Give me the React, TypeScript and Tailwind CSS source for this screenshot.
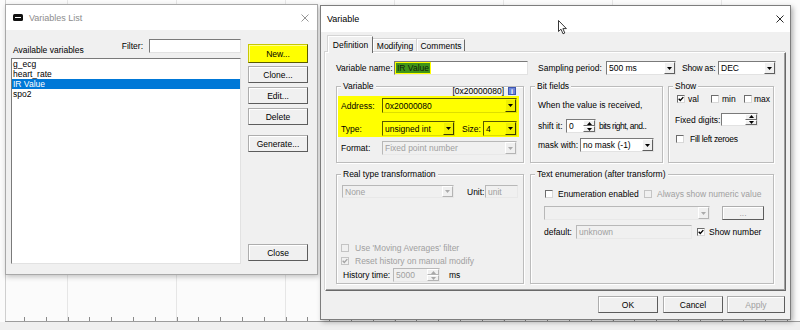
import React from "react";

const SUNKEN = "border border-t-[#7a7a7a] border-l-[#7a7a7a] border-r-[#e2e2e2] border-b-[#e2e2e2]";
const SUNKEN_DIS = "border border-t-[#b8b8b8] border-l-[#b8b8b8] border-r-[#e8e8e8] border-b-[#e8e8e8]";
const SUNKEN_Y = "border border-t-[#5a5a00] border-l-[#5a5a00] border-r-[#dede00] border-b-[#dede00]";
const GRAY_TEXT = "text-[#a0a0a0]";

function Tri({ up, color = "#000" }: { up?: boolean; color?: string }) {
  return (
    <svg width="5" height="3" viewBox="0 0 5 3">
      <path d={up ? "M0 3H5L2.5 0Z" : "M0 0H5L2.5 3Z"} fill={color} />
    </svg>
  );
}

function DropBtn({ yellow, disabled }: { yellow?: boolean; disabled?: boolean }) {
  const look = yellow
    ? "bg-[#f0f000] border-t-[#ffff00] border-l-[#ffff00] border-r-[#3c3c00] border-b-[#3c3c00]"
    : disabled
    ? "bg-[#f0f0f0] border-t-white border-l-white border-r-[#b4b4b4] border-b-[#b4b4b4]"
    : "bg-[#f0f0f0] border-t-white border-l-white border-r-[#5e5e5e] border-b-[#5e5e5e]";
  return (
    <div className={`w-[11px] shrink-0 flex items-center justify-center border ${look}`}>
      <Tri color={disabled ? "#ababab" : "#000"} />
    </div>
  );
}

function Combo({
  className = "",
  value,
  yellow,
  disabled,
}: {
  className?: string;
  value: string;
  yellow?: boolean;
  disabled?: boolean;
}) {
  const look = yellow ? `bg-[#ffff00] ${SUNKEN_Y}` : disabled ? `bg-[#f0f0f0] ${SUNKEN_DIS}` : `bg-white ${SUNKEN}`;
  return (
    <div className={`flex shrink-0 ${look} ${className}`}>
      <span className={`flex-1 self-center pl-[2px] whitespace-nowrap overflow-hidden ${disabled ? GRAY_TEXT : ""}`}>
        {value}
      </span>
      <DropBtn yellow={yellow} disabled={disabled} />
    </div>
  );
}

function Input({ className = "", value, disabled }: { className?: string; value: string; disabled?: boolean }) {
  return (
    <div
      className={`flex items-center shrink-0 pl-[2px] ${disabled ? `bg-[#f0f0f0] ${SUNKEN_DIS} ${GRAY_TEXT}` : `bg-white ${SUNKEN}`} ${className}`}
    >
      {value}
    </div>
  );
}

function Spin({ className = "", value, disabled }: { className?: string; value: string; disabled?: boolean }) {
  const btn = disabled
    ? "flex-1 flex items-center justify-center border bg-[#f0f0f0] border-t-white border-l-white border-r-[#b4b4b4] border-b-[#b4b4b4]"
    : "flex-1 flex items-center justify-center border bg-[#f0f0f0] border-t-white border-l-white border-r-[#6a6a6a] border-b-[#6a6a6a]";
  const c = disabled ? "#a8a8a8" : "#000";
  return (
    <div className={`flex shrink-0 ${disabled ? `bg-[#f0f0f0] ${SUNKEN_DIS}` : `bg-white ${SUNKEN}`} ${className}`}>
      <span className={`flex-1 self-center pl-[2px] ${disabled ? GRAY_TEXT : ""}`}>{value}</span>
      <div className="w-[12px] flex flex-col">
        <div className={btn}>
          <Tri up color={c} />
        </div>
        <div className={btn}>
          <Tri color={c} />
        </div>
      </div>
    </div>
  );
}

function Box({ checked, disabled, className = "" }: { checked?: boolean; disabled?: boolean; className?: string }) {
  const look = disabled
    ? "bg-[#f0f0f0] border-[#c4c4c4]"
    : "bg-white border-t-[#6c6c6c] border-l-[#6c6c6c] border-r-[#d8d8d8] border-b-[#d8d8d8]";
  return (
    <span className={`w-[8px] h-[8px] shrink-0 flex items-center justify-center border ${look} ${className}`}>
      {checked && (
        <svg width="6" height="6" viewBox="0 0 6 6">
          <path d="M0.7 2.7L2.3 4.4L5.3 1.1" fill="none" stroke={disabled ? "#a4a4a4" : "#000"} strokeWidth="1.4" />
        </svg>
      )}
    </span>
  );
}

function Btn({
  children,
  className = "",
  disabled,
  yellow,
}: {
  children: React.ReactNode;
  className?: string;
  disabled?: boolean;
  yellow?: boolean;
}) {
  const look = yellow
    ? "bg-[#ffff00] border-[#c8c800] border-r-[#5a5a00] border-b-[#5a5a00] shadow-[inset_1px_1px_0_#ffff90]"
    : "bg-[#f0f0f0] border-[#adadad] border-r-[#5c5c5c] border-b-[#5c5c5c] shadow-[inset_1px_1px_0_#ffffff]";
  return (
    <div className={`flex items-center justify-center shrink-0 border ${look} ${disabled ? GRAY_TEXT : ""} ${className}`}>
      {children}
    </div>
  );
}

function Group({
  title,
  className = "",
  right,
  children,
}: {
  title: string;
  className?: string;
  right?: React.ReactNode;
  children: React.ReactNode;
}) {
  return (
    <div
      className={`flex flex-col shrink-0 border border-[#bcbcbc] shadow-[inset_1px_1px_0_#ffffff,1px_1px_0_#ffffff] ${className}`}
    >
      <div className="-mt-[6px] flex items-start">
        <span className="ml-[4px] px-[2px] h-[10px] bg-[#f0f0f0] whitespace-nowrap">{title}</span>
        {right}
      </div>
      {children}
    </div>
  );
}

function CloseX({ color }: { color: string }) {
  return (
    <svg width="8" height="8" viewBox="0 0 8 8" className="ml-auto">
      <path d="M0.5 0.5L7.5 7.5M7.5 0.5L0.5 7.5" stroke={color} strokeWidth="0.9" />
    </svg>
  );
}

function Backdrop() {
  const ticks = Array.from({ length: 36 }, (_, i) => 24 + i * 21.8);
  const grid = [67.5, 176.5, 285.5, 394.5, 503.5, 612.5, 721.5];
  return (
    <svg className="absolute inset-0" width="800" height="330">
      <rect width="800" height="330" fill="#fbfbfb" />
      {grid.map((x) => (
        <line key={x} x1={x} x2={x} y1="0" y2="321" stroke="#e6e6e6" />
      ))}
      <line x1="5.5" x2="5.5" y1="0" y2="321" stroke="#cfcfcf" />
      <rect y="322" width="800" height="8" fill="#efefef" />
      <line x1="5" x2="800" y1="321.5" y2="321.5" stroke="#9c9c9c" />
      {ticks.map((x) => (
        <line key={x} x1={Math.round(x) + 0.5} x2={Math.round(x) + 0.5} y1="317" y2="321" stroke="#8a8a8a" />
      ))}
    </svg>
  );
}

function VariablesList() {
  const items = ["g_ecg", "heart_rate", "IR Value", "spo2"];
  return (
    <div className="absolute left-[5px] top-[4px] w-[313px] h-[271px] flex flex-col border border-[#a8a8a8] bg-[#f0f0f0] shadow-[1px_2px_5px_rgba(0,0,0,0.22)]">
      <div className="h-[25px] shrink-0 bg-white flex items-center pl-[7px] pr-[8px]">
        <svg width="10" height="7" viewBox="0 0 10 7">
          <rect width="10" height="7" rx="1.5" fill="#111" />
          <rect x="2" y="3" width="6" height="1" fill="#fff" />
        </svg>
        <span className="ml-[6px] text-[9px] text-[#8c8c8c]">Variables List</span>
        <CloseX color="#8a8a8a" />
      </div>
      <div className="flex-1 flex pl-[5px]">
        <div className="w-[230px] pt-[9px] flex flex-col">
          <div className="flex items-start h-[14px]">
            <span className="mt-[6px] ml-[2px] whitespace-nowrap">Available variables</span>
            <span className="ml-auto mt-[2px] mr-[6px]">Filter:</span>
            <div className={`w-[92px] h-[14px] bg-white ${SUNKEN}`} />
          </div>
          <div className={`mt-[5px] h-[206px] bg-white ${SUNKEN} flex flex-col`}>
            {items.map((it) => (
              <div
                key={it}
                className={`h-[10px] pl-[1px] whitespace-nowrap ${it === "IR Value" ? "bg-[#0078d7] text-white" : ""}`}
              >
                {it}
              </div>
            ))}
          </div>
        </div>
        <div className="ml-[7px] w-[60px] flex flex-col pt-[14px] pb-[13px]">
          <Btn yellow className="h-[19px]">New...</Btn>
          <Btn className="mt-[3px] h-[17px]">Clone...</Btn>
          <Btn className="mt-[4px] h-[17px]">Edit...</Btn>
          <Btn className="mt-[4px] h-[17px]">Delete</Btn>
          <Btn className="mt-[10px] h-[17px]">Generate...</Btn>
          <Btn className="mt-auto h-[17px]">Close</Btn>
        </div>
      </div>
    </div>
  );
}

function VariableDialog() {
  return (
    <div className="absolute left-[320px] top-[5px] w-[471px] h-[315px] flex flex-col border border-[#7d7d7d] bg-[#f0f0f0] shadow-[2px_2px_5px_rgba(0,0,0,0.3)]">
      <div className="h-[26px] shrink-0 bg-white flex items-center pl-[6px] pr-[6px]">
        <span className="text-[9px]">Variable</span>
        <CloseX color="#111" />
      </div>
      <div className="flex-1 flex flex-col px-[4px] pt-[4px]">
        {/* Tabs */}
        <div className="flex items-end h-[16px] pl-[3px]">
          <div className="relative z-10 -mb-[1px] h-[17px] w-[45px] flex items-center justify-center bg-[#f0f0f0] border border-b-0 border-t-white border-l-white border-r-[#696969] shadow-[-1px_-1px_0_#d4d4d4]">
            Definition
          </div>
          <div className="h-[13px] w-[44px] flex items-center justify-center border border-b-0 border-t-white border-l-white border-r-[#696969] shadow-[-1px_-1px_0_#d4d4d4]">
            Modifying
          </div>
          <div className="h-[13px] w-[48px] flex items-center justify-center border border-b-0 border-t-white border-l-white border-r-[#696969] shadow-[-1px_-1px_0_#d4d4d4]">
            Comments
          </div>
        </div>

        {/* Tab panel */}
        <div className="h-[239px] flex flex-col pl-[10px] pt-[8px] border border-t-white border-l-white border-r-[#696969] border-b-[#696969] shadow-[inset_-1px_-1px_0_#a0a0a0,-1px_-1px_0_#d4d4d4]">
          <div className="flex items-center h-[14px]">
            <span className="w-[58px] whitespace-nowrap">Variable name:</span>
            <div className={`w-[134px] h-[14px] bg-white ${SUNKEN} flex items-center`}>
              <span className="bg-[#ffff00] px-[1px] py-[1px] flex">
                <span className="bg-[#3f9417] text-[#10200a] px-[1px] h-[10px]">IR Value</span>
              </span>
            </div>
            <span className="ml-[10px] w-[68px] whitespace-nowrap">Sampling period:</span>
            <Combo className="w-[70px] h-[14px]" value="500 ms" />
            <span className="ml-[6px] w-[36px] whitespace-nowrap tracking-[-0.2px]">Show as:</span>
            <Combo className="w-[58px] h-[14px]" value="DEC" />
          </div>

          <div className="mt-[11px] flex h-[77px]">
            <Group
              title="Variable"
              className="w-[188px] h-[77px]"
              right={
                <div className="ml-auto mt-[5px] mr-[7px] flex items-center h-[10px]">
                  <span>[0x20000080]</span>
                  <span className="ml-[4px] w-[8px] h-[8px] flex items-center justify-center bg-[#6f86d8] border border-[#3d56b0] text-white text-[7px] leading-[7px] font-bold">
                    i
                  </span>
                </div>
              }
            >
              <div className="ml-[1px] w-[181px] h-[41px] bg-[#ffff00] pl-[3px] pt-[2px] flex flex-col">
                <div className="flex items-center h-[15px]">
                  <span className="w-[41px]">Address:</span>
                  <Combo className="w-[135px] h-[15px]" value="0x20000080" yellow />
                </div>
                <div className="mt-[8px] flex items-center h-[15px]">
                  <span className="w-[41px]">Type:</span>
                  <Combo className="w-[73px] h-[15px]" value="unsigned int" yellow />
                  <span className="ml-[7px] w-[21px]">Size:</span>
                  <Combo className="w-[34px] h-[15px]" value="4" yellow />
                </div>
              </div>
              <div className="mt-[4px] ml-[4px] flex items-center h-[14px]">
                <span className="w-[41px]">Format:</span>
                <Combo className="w-[135px] h-[14px]" value="Fixed point number" disabled />
              </div>
            </Group>

            <Group title="Bit fields" className="ml-[6px] w-[133px] h-[77px]">
              <div className="pl-[7px] flex flex-col">
                <span className="mt-[9px] whitespace-nowrap">When the value is received,</span>
                <div className="mt-[9px] flex items-center h-[14px]">
                  <span className="w-[28px] whitespace-nowrap">shift it:</span>
                  <Spin className="w-[30px] h-[14px]" value="0" />
                  <span className="ml-[3px] whitespace-nowrap tracking-[-0.5px]">bits right, and..</span>
                </div>
                <div className="mt-[5px] flex items-center h-[14px]">
                  <span className="w-[42px] whitespace-nowrap">mask with:</span>
                  <Combo className="w-[74px] h-[14px]" value="no mask (-1)" />
                </div>
              </div>
            </Group>

            <Group title="Show" className="ml-[5px] w-[106px] h-[77px]">
              <div className="mt-[3px] pl-[8px] flex items-center h-[10px]">
                <div className="w-[34px] flex items-center">
                  <Box checked />
                  <span className="ml-[3px]">val</span>
                </div>
                <div className="w-[33px] flex items-center">
                  <Box />
                  <span className="ml-[3px]">min</span>
                </div>
                <Box />
                <span className="ml-[2px]">max</span>
              </div>
              <div className="mt-[9px] pl-[6px] flex items-center h-[13px]">
                <span className="w-[46px] whitespace-nowrap">Fixed digits:</span>
                <Spin className="w-[37px] h-[13px]" value="" />
              </div>
              <div className="mt-[8px] pl-[7px] flex items-center h-[10px]">
                <Box />
                <span className="ml-[6px] whitespace-nowrap tracking-[-0.3px]">Fill left zeroes</span>
              </div>
            </Group>
          </div>

          <div className="mt-[11px] flex h-[110px]">
            <Group title="Real type transformation" className="w-[188px] h-[110px]">
              <div className="mt-[6px] pl-[5px] flex items-center h-[13px]">
                <Combo className="w-[112px] h-[13px]" value="None" disabled />
                <span className="ml-[13px] w-[18px]">Unit:</span>
                <Input className="w-[33px] h-[13px]" value="unit" disabled />
              </div>
              <div className="mt-[45px] pl-[4px] flex items-center h-[10px]">
                <Box disabled />
                <span className={`ml-[6px] whitespace-nowrap ${GRAY_TEXT}`}>Use 'Moving Averages' filter</span>
              </div>
              <div className="mt-[3px] pl-[4px] flex items-center h-[10px]">
                <Box checked disabled />
                <span className={`ml-[6px] whitespace-nowrap ${GRAY_TEXT}`}>Reset history on manual modify</span>
              </div>
              <div className="mt-[2px] pl-[6px] flex items-center h-[14px]">
                <span className="w-[50px] whitespace-nowrap">History time:</span>
                <Spin className="w-[47px] h-[14px]" value="5000" disabled />
                <span className="ml-[9px]">ms</span>
              </div>
            </Group>

            <Group title="Text enumeration (after transform)" className="ml-[6px] w-[244px] h-[110px]">
              <div className="mt-[10px] pl-[14px] flex items-center h-[10px]">
                <div className="w-[99px] flex items-center">
                  <Box />
                  <span className="ml-[5px] whitespace-nowrap">Enumeration enabled</span>
                </div>
                <Box disabled />
                <span className={`ml-[5px] whitespace-nowrap ${GRAY_TEXT}`}>Always show numeric value</span>
              </div>
              <div className="mt-[7px] pl-[13px] flex items-center h-[14px]">
                <Combo className="w-[166px] h-[14px]" value="" disabled />
                <Btn className="ml-[12px] w-[42px] h-[14px]" disabled>
                  ...
                </Btn>
              </div>
              <div className="mt-[5px] pl-[13px] flex items-center h-[14px]">
                <span className="w-[32px]">default:</span>
                <Input className="w-[116px] h-[14px]" value="unknown" disabled />
                <Box checked className="ml-[5px]" />
                <span className="ml-[4px] whitespace-nowrap">Show number</span>
              </div>
            </Group>
          </div>
        </div>

        {/* Dialog buttons */}
        <div className="mt-[5px] flex justify-end pr-[1px]">
          <Btn className="w-[60px] h-[17px]">OK</Btn>
          <Btn className="ml-[5px] w-[60px] h-[17px]">Cancel</Btn>
          <Btn className="ml-[4px] w-[58px] h-[17px]" disabled>
            Apply
          </Btn>
        </div>
      </div>
    </div>
  );
}

function Cursor() {
  return (
    <svg className="absolute left-[558px] top-[20px]" width="10" height="15" viewBox="0 0 10 15">
      <path
        d="M0.5 0.5V11.5L3 9.2L5 13.8L6.8 13L4.9 8.6H8.4Z"
        fill="#fff"
        stroke="#222"
        strokeWidth="0.9"
        strokeLinejoin="round"
      />
    </svg>
  );
}

export default function App() {
  return (
    <div className="relative w-[800px] h-[330px] overflow-hidden font-['Liberation_Sans',Arial,sans-serif] text-[8.5px] leading-[10px] text-black">
      <Backdrop />
      <VariablesList />
      <VariableDialog />
      <Cursor />
    </div>
  );
}
